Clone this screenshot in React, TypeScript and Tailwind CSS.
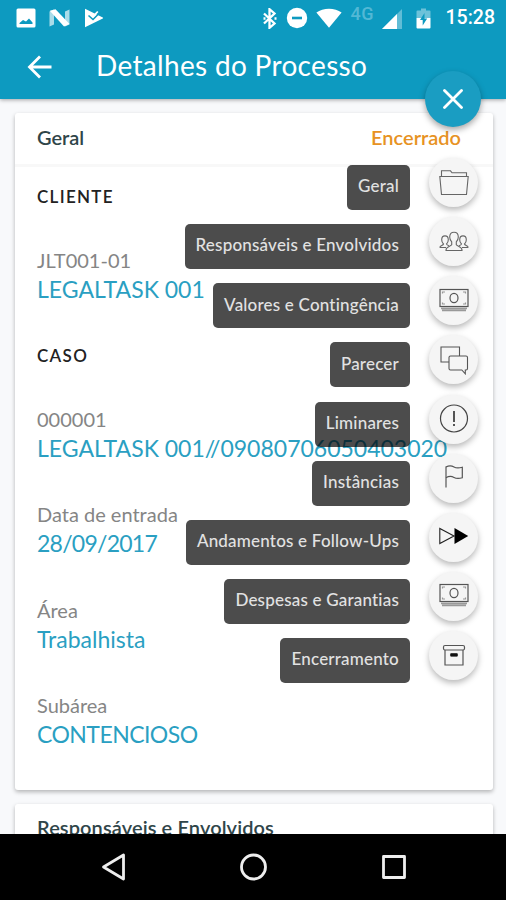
import React from "react";

type Field = { label: string; value: string };

const sections: { title: string; fields: Field[] }[] = [
  {
    title: "CLIENTE",
    fields: [{ label: "JLT001-01", value: "LEGALTASK 001" }],
  },
  {
    title: "CASO",
    fields: [
      { label: "000001", value: "LEGALTASK 001//09080706050403020" },
      { label: "Data de entrada", value: "28/09/2017" },
      { label: "Área", value: "Trabalhista" },
      { label: "Subárea", value: "CONTENCIOSO" },
    ],
  },
];

const tracking: Record<string, string> = {
  "28/09/2017": "tracking-[-0.75px]",
  CONTENCIOSO: "tracking-[-0.55px]",
};

const FolderIcon = () => (
  <svg width="30" height="30" viewBox="0 0 30 30" fill="none" stroke="#666" strokeWidth="1.1">
    <path d="M2.5 8.500V2.800h9l1.500 2h14.500v3.700" />
    <path d="M.8 8.500h28.400L27.500 26.500h-25z" />
  </svg>
);

const PeopleIcon = () => (
  <svg width="30" height="30" viewBox="0 0 30 30" fill="none" stroke="#666" strokeWidth="1.1">
    <path d="M12.700 14.800c-1.300-1.200-2-3-2-4.800 0-3 1.700-4.800 4.300-4.800s4.300 1.800 4.300 4.800c0 1.800-.7 3.600-2 4.800v3c1 1.700 5.700 1.600 5.700 5.200v.5H7V23c0-3.600 4.700-3.500 5.700-5.200z" />
    <path d="M.8 20.500c.2-2.200 3.300-1.800 3.700-3.500-1.200-1-1.800-2.500-1.800-4.200 0-2.400 1.300-3.900 3.300-3.900s3.300 1.500 3.300 3.900c0 1.700-.6 3.200-1.800 4.200.2 1.200 1.500 1.300 2.500 1.700M.8 20.500H7" />
    <path d="M29.200 20.500c-.2-2.200-3.300-1.800-3.700-3.500 1.200-1 1.800-2.500 1.800-4.200 0-2.400-1.300-3.900-3.300-3.900s-3.300 1.500-3.300 3.900c0 1.700.6 3.200 1.800 4.200-.2 1.200-1.500 1.300-2.500 1.700M29.200 20.500H23" />
  </svg>
);

const MoneyIcon = () => (
  <svg width="30" height="30" viewBox="0 0 30 30" fill="none" stroke="#555" strokeWidth="1.2">
    <rect x="1" y="3.500" width="28" height="17" />
    <ellipse cx="15" cy="12" rx="4" ry="4.700" />
    <path d="M3.500 7.500V6H6M24 6h2.500v1.500M3.500 16.500V18H6M24 18h2.500v-1.500" stroke="#999" />
    <path d="M2 22.300h26M3 24.300h24" stroke="#999" strokeWidth="1.700" />
  </svg>
);

const ChatIcon = () => (
  <svg width="30" height="30" viewBox="0 0 30 30" fill="none" stroke="#555" strokeWidth="1.1">
    <path d="M10 17H2V2h18.500v9" />
    <path d="M11.500 11H27q1.500 0 1.500 1.500v11q0 1.500-1.500 1.500h-.7v3.800L22.800 25H11.500q-1.500 0-1.500-1.500v-11q0-1.500 1.500-1.500z" />
  </svg>
);

const AlertIcon = () => (
  <svg width="30" height="30" viewBox="0 0 30 30" fill="none" stroke="#444" strokeWidth="1.2">
    <circle cx="15" cy="14.500" r="13.500" />
    <path d="M15 7v11M15 20v2" strokeWidth="1.800" />
  </svg>
);

const FlagIcon = () => (
  <svg width="30" height="30" viewBox="0 0 30 30" fill="none" stroke="#555" strokeWidth="1.2">
    <path d="M7 24.500v-21" />
    <path d="M7 4c3-1.500 5.500-1.400 8 0s5 1.200 8.300.2v10.500c-3.300 1-5.800 1.100-8.300-.3s-5-1.500-8 .3" />
  </svg>
);

const ForwardIcon = () => (
  <svg width="30" height="30" viewBox="0 0 30 30" fill="none" stroke="#222" strokeWidth="1.1">
    <path d="M.8 6.500v15L15 14z" />
    <path d="M15.500 6v16L29.200 14z" fill="#000" stroke="none" />
  </svg>
);

const ArchiveIcon = () => (
  <svg width="30" height="30" viewBox="0 0 30 30" fill="none" stroke="#555" strokeWidth="1.2">
    <rect x="4.500" y="4.500" width="21" height="4.500" rx="1.500" />
    <path d="M6 9v15h18V9" />
    <rect x="11.500" y="12.500" width="7" height="2.800" rx="0.600" fill="#111" stroke="#111" strokeWidth="0.600" />
  </svg>
);

const menu: { label: string; icon: React.FC }[] = [
  { label: "Geral", icon: FolderIcon },
  { label: "Responsáveis e Envolvidos", icon: PeopleIcon },
  { label: "Valores e Contingência", icon: MoneyIcon },
  { label: "Parecer", icon: ChatIcon },
  { label: "Liminares", icon: AlertIcon },
  { label: "Instâncias", icon: FlagIcon },
  { label: "Andamentos e Follow-Ups", icon: ForwardIcon },
  { label: "Despesas e Garantias", icon: MoneyIcon },
  { label: "Encerramento", icon: ArchiveIcon },
];

const StatusBar = () => (
  <div className="flex h-9 items-center pl-4 pr-[11px] text-white">
    <svg width="20" height="20" viewBox="0 0 20 20">
      <path
        fill="currentColor"
        fillRule="evenodd"
        d="M2 .5h16q1.500 0 1.500 1.500v16q0 1.500-1.500 1.500H2Q.5 19.500.5 18V2Q.5.500 2 .5zM3.500 16h13v-1.500L13 10.500l-3 3-3-1.500-3.500 3z"
      />
    </svg>
    <svg className="ml-[13px]" width="21" height="18" viewBox="0 0 21 18" fill="currentColor">
      <path d="M.5 2.500 5 .5v15l-4.500 2z" opacity=".65" />
      <path d="M16 2.500 20.500.5v15l-4.500 2z" opacity=".65" />
      <path d="M.8 1.800 6.500.3l14 14.700-5.500 2.500z" />
    </svg>
    <svg className="ml-[14px]" width="20" height="20" viewBox="0 0 20 20">
      <path d="M1 .8 18.800 9.500q.6.500 0 1L1 19.200z" fill="currentColor" />
      <path d="m4.500 7.500 4.500 4L16 4.500" stroke="#0d9ac0" strokeWidth="1.600" fill="none" />
      <path d="m7 6.300 2.300 2L13.800 3.500" stroke="currentColor" strokeWidth="1.800" fill="none" />
    </svg>
    <svg className="ml-auto" width="14" height="21" viewBox="0 0 14 21" fill="none" stroke="currentColor" strokeWidth="2.300">
      <path d="m1 5.500 10.500 10-5 4.300V1.200l5 4.300L1 15.500" />
      <path d="M.5 9.300h2v2.400h-2zM11.500 9.300h2v2.400h-2z" fill="currentColor" stroke="none" />
    </svg>
    <svg className="ml-[9px]" width="22" height="22" viewBox="0 0 22 22">
      <circle cx="11" cy="11" r="10.200" fill="currentColor" />
      <path d="M6 11h10" stroke="#0d9ac0" strokeWidth="2.600" />
    </svg>
    <svg className="ml-2" width="26" height="20" viewBox="0 0 26 20">
      <path d="M.4 4.500C7-.6 19-.6 25.600 4.500L13 19.800z" fill="currentColor" />
    </svg>
    <span className="-mt-2 ml-[9px] w-[25px] font-['Roboto'] text-[18px] font-medium leading-5 tracking-[0.5px] text-[#52b8d5]">
      4G
    </span>
    <svg className="ml-[6px] mt-px" width="20" height="20" viewBox="0 0 20 20" fill="currentColor">
      <path d="M20 0v20H0z" opacity=".35" />
      <path d="M15 5v15H0z" />
    </svg>
    <svg className="ml-[14px]" width="15" height="21" viewBox="0 0 15 21">
      <path d="M5 .5h5v2h3.500q1 0 1 1V10H.5V3.500q0-1 1-1H5z" fill="currentColor" opacity=".4" />
      <path d="M.5 10h14v9.500q0 1-1 1h-12q-1 0-1-1z" fill="currentColor" />
      <path d="m8.500 5-4.500 7h2.700V17.500l4.500-7H8.500z" fill="#0d9ac0" />
    </svg>
    <span className="ml-[15px] whitespace-nowrap font-['Roboto'] text-[19.5px] font-medium leading-6">15:28</span>
  </div>
);

const FieldRow: React.FC<Field> = ({ label, value }) => (
  <div className="mb-[37.5px] whitespace-nowrap">
    <div className="h-7 text-[20px] leading-7 text-[#858585]">{label}</div>
    <div className={`h-[30px] text-[23px] leading-[30px] text-[#2a9fc2] ${tracking[value] ?? ""}`}>{value}</div>
  </div>
);

export default function App() {
  return (
    <div className="relative flex h-[900px] w-[506px] flex-col overflow-hidden bg-[#f8f9fb] font-['Lato',sans-serif]">
      <header className="relative h-[99px] shrink-0 bg-[#0d9ac0] shadow-[0_1px_4px_rgba(0,0,0,0.35)]">
        <StatusBar />
        <div className="flex h-[61px] items-center pl-[27px] text-white">
          <svg width="26" height="26" viewBox="0 0 26 26" fill="none" stroke="currentColor" strokeWidth="2.8">
            <path d="M24.500 13H3M13 2.500 2.500 13 13 23.500" />
          </svg>
          <h1 className="-mt-[3px] ml-[43px] whitespace-nowrap text-[28px] leading-9 tracking-[0.32px]">Detalhes do Processo</h1>
        </div>
      </header>

      <main className="min-h-0 flex-1 overflow-hidden pl-[15px] pr-[13px] pt-[14px]">
        <div className="h-[677px] rounded-[3px] bg-white shadow-[0_2px_4px_rgba(0,0,0,0.28)]">
          <div className="flex h-[54px] items-center justify-between border-b-[3px] border-[#f8f8f8] pb-[3px] pl-[22px] pr-8 text-[20px] font-semibold">
            <h2 className="text-[#2f4549]">Geral</h2>
            <span className="text-[#e79223]">Encerrado</span>
          </div>
          <div className="pl-[22px] pt-[20px]">
            {sections.map((s) => (
              <section key={s.title} className="mb-[41.5px]">
                <h3 className="mb-[39px] h-5 text-[17px] font-semibold leading-5 tracking-[1.3px] text-[#222]">
                  {s.title}
                </h3>
                {s.fields.map((f) => (
                  <FieldRow key={f.label} {...f} />
                ))}
              </section>
            ))}
          </div>
        </div>
        <div className="mt-[14px] h-[200px] rounded-[3px] bg-white pl-[22px] pt-[11px] shadow-[0_2px_4px_rgba(0,0,0,0.28)]">
          <h2 className="text-[20px] font-semibold leading-6 tracking-[0.1px] text-[#2f4549]">Responsáveis e Envolvidos</h2>
        </div>
      </main>

      <nav className="relative flex h-[66.5px] shrink-0 items-center bg-black pl-[101px]">
        <svg width="25" height="28" viewBox="0 0 25 28" fill="none" stroke="#eee" strokeWidth="2.8" strokeLinejoin="round">
          <path d="M22.500 2v24L2.500 14z" />
        </svg>
        <svg className="ml-[114px]" width="28" height="28" viewBox="0 0 28 28" fill="none" stroke="#eee" strokeWidth="2.8">
          <circle cx="13.500" cy="14" r="12" />
        </svg>
        <svg className="ml-[113px]" width="26" height="26" viewBox="0 0 26 26" fill="none" stroke="#eee" strokeWidth="2.8" strokeLinejoin="round">
          <path d="M2.500 2.500h21v21h-21z" />
        </svg>
      </nav>

      {/* speed dial over the page */}
      <div className="absolute right-[25px] top-[71px] flex flex-col items-end">
        <button className="flex h-14 w-14 items-center justify-center rounded-full bg-[#1a9dc2] shadow-[0_3px_6px_rgba(0,0,0,0.35)]">
          <svg width="20" height="20" viewBox="0 0 20 20" fill="none" stroke="#fff" strokeWidth="2.8" strokeLinecap="round">
            <path d="m1.500 1.500 17 17M18.500 1.500l-17 17" />
          </svg>
        </button>
        <ul className="mr-[3px] mt-[31px]">
          {menu.map(({ label, icon: Icon }, i) => (
            <li key={i} className="flex h-[59.15px] items-start justify-end gap-[19px]">
              <span className="mt-[7px] flex h-[45px] items-center whitespace-nowrap rounded-[5px] bg-black/70 px-[11px] pb-[3px] text-[17px] font-medium tracking-[0.2px] text-[#e2e2e2]">
                {label}
              </span>
              <span className="flex h-[49px] w-[49px] items-center justify-center rounded-full bg-[#f5f5f5] shadow-[0_3px_6px_rgba(0,0,0,0.28)]">
                <Icon />
              </span>
            </li>
          ))}
        </ul>
      </div>
    </div>
  );
}
